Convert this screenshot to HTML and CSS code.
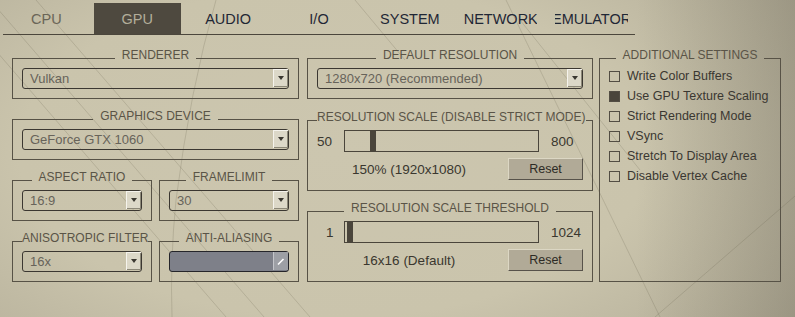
FILE: index.html
```html
<!DOCTYPE html>
<html lang="en">
<head>
    <meta charset="UTF-8">
    <title>GPU settings</title>
    <link rel="stylesheet" href="styles.css">
</head>
<body>
<svg class="backdrop" viewBox="0 0 795 317" width="795" height="317">
    <path d="M-48 0 L226 317 M-10 0 L264 317 M36 0 L310 317 M506 0 L660 317 M795 196 L655 317 M520 20 L640 170 M355 0 L405 60"/>
    <path d="M216 0 Q190 90 176 200 Q170 260 172 317"/>
</svg>

<div class="tabs">
    <div class="tab muted"><div class="tab-label">CPU</div></div>
    <div class="tab active"><div class="tab-label">GPU</div></div>
    <div class="tab"><div class="tab-label">AUDIO</div></div>
    <div class="tab"><div class="tab-label">I/O</div></div>
    <div class="tab"><div class="tab-label">SYSTEM</div></div>
    <div class="tab"><div class="tab-label">NETWORK</div></div>
    <div class="tab"><div class="tab-label">EMULATOR</div></div>
</div>

<div class="panes">
    <!-- left column: renderer / device / small combos -->
    <div class="col col-left">
        <fieldset class="group">
            <legend>RENDERER</legend>
            <div class="combo"><span class="combo-value">Vulkan</span><span class="arrow"><i></i></span></div>
        </fieldset>
        <fieldset class="group">
            <legend>GRAPHICS DEVICE</legend>
            <div class="combo"><span class="combo-value">GeForce GTX 1060</span><span class="arrow"><i></i></span></div>
        </fieldset>
        <div class="pair">
            <fieldset class="group half">
                <legend>ASPECT RATIO</legend>
                <div class="combo"><span class="combo-value">16:9</span><span class="arrow"><i></i></span></div>
            </fieldset>
            <fieldset class="group half">
                <legend>FRAMELIMIT</legend>
                <div class="combo"><span class="combo-value">30</span><span class="arrow"><i></i></span></div>
            </fieldset>
        </div>
        <div class="pair">
            <fieldset class="group half">
                <legend class="tight">ANISOTROPIC FILTER</legend>
                <div class="combo"><span class="combo-value">16x</span><span class="arrow"><i></i></span></div>
            </fieldset>
            <fieldset class="group half">
                <legend>ANTI-ALIASING</legend>
                <div class="combo disabled">
                    <span class="combo-value"></span>
                    <span class="arrow">
                        <svg width="9" height="9" viewBox="0 0 9 9"><path d="M2 7.5 L7.5 2" stroke="#fff" stroke-width="1.6"/></svg>
                    </span>
                </div>
            </fieldset>
        </div>
    </div>

    <!-- middle column: resolution -->
    <div class="col col-mid">
        <fieldset class="group">
            <legend>DEFAULT RESOLUTION</legend>
            <div class="combo"><span class="combo-value">1280x720 (Recommended)</span><span class="arrow"><i></i></span></div>
        </fieldset>
        <fieldset class="group scale-group">
            <legend class="tight">RESOLUTION SCALE (DISABLE STRICT MODE)</legend>
            <div class="slider-row">
                <span class="min">50</span>
                <div class="track"><div class="handle" style="left: 25px"></div></div>
                <span class="max">800</span>
            </div>
            <div class="value-row">
                <span class="value-label">150% (1920x1080)</span>
                <div class="reset">Reset</div>
            </div>
        </fieldset>
        <fieldset class="group">
            <legend>RESOLUTION SCALE THRESHOLD</legend>
            <div class="slider-row">
                <span class="min one">1</span>
                <div class="track"><div class="handle" style="left: 2px"></div></div>
                <span class="max">1024</span>
            </div>
            <div class="value-row">
                <span class="value-label">16x16 (Default)</span>
                <div class="reset">Reset</div>
            </div>
        </fieldset>
    </div>

    <!-- right column: checkboxes -->
    <fieldset class="group extra">
        <legend>ADDITIONAL SETTINGS</legend>
        <div class="checks">
            <div class="check"><span class="box"></span>Write Color Buffers</div>
            <div class="check"><span class="box on"></span>Use GPU Texture Scaling</div>
            <div class="check"><span class="box"></span>Strict Rendering Mode</div>
            <div class="check"><span class="box"></span>VSync</div>
            <div class="check"><span class="box"></span>Stretch To Display Area</div>
            <div class="check"><span class="box"></span>Disable Vertex Cache</div>
        </div>
    </fieldset>
</div>
</body>
</html>
```

FILE: styles.css
```css
body {
    margin: 0;
    width: 795px;
    height: 317px;
    overflow: hidden;
    position: relative;
    font-family: "Liberation Sans", Arial, sans-serif;
    background:
        linear-gradient(to right, rgba(0,0,0,0) 80%, rgba(70,66,55,0.22) 100%),
        radial-gradient(ellipse 72% 95% at 42% 48%, #ccc6af 0%, #cac4ac 55%, #b2ac97 100%);
}

/* faint decorative lines behind everything */
.backdrop {
    position: absolute;
    left: 0;
    top: 0;
    pointer-events: none;
}

.backdrop path {
    fill: none;
    stroke: rgba(95, 88, 70, 0.2);
    stroke-width: 1;
}

.tabs {
    position: relative;
    display: flex;
    gap: 4px;
    width: 632px;
    margin: 3px 0 0 3px;
    border-bottom: 1px solid #4b463c;
}

.tab {
    width: 87px;
    height: 31px;
    display: flex;
    justify-content: center;
    align-items: center;
    font-size: 14.5px;
    color: #1f2735;
}

.tab-label {
    width: 73px;
    display: flex;
    justify-content: center;
    overflow: hidden;
    white-space: nowrap;
}

.tab.muted {
    color: #6a6557;
}

.tab.active {
    background-color: #4e493f;
    color: #b3ae9a;
}

.panes {
    position: relative;
    display: flex;
    margin-top: 13px;
    padding-left: 12px;
}

.col {
    display: flex;
    flex-direction: column;
    gap: 10px;
}

.col-left {
    width: 287px;
    margin-right: 8px;
}

.col-mid {
    width: 286px;
    margin-right: 6px;
}

.col-mid > .group:first-child {
    margin-bottom: 1px;
}

.pair {
    display: flex;
    gap: 7px;
}

.group {
    margin: 0;
    padding: 0 9px 9px;
    border: 1px solid #575246;
    min-width: 0;
    box-sizing: border-box;
}

.group legend {
    margin: 0 auto;
    padding: 0 7px 6px;
    font-size: 12px;
    line-height: 14px;
    color: #5a5447;
    white-space: nowrap;
}

.group legend.tight {
    padding-left: 0;
    padding-right: 0;
}

.half {
    width: 140px;
}

.combo {
    height: 21px;
    box-sizing: border-box;
    border: 1px solid #3b3731;
    border-radius: 3px;
    display: flex;
    align-items: center;
    padding-left: 7px;
    font-size: 13px;
    color: #67635a;
}

.combo-value {
    flex: 1;
    white-space: nowrap;
}

.arrow {
    width: 15px;
    align-self: stretch;
    margin-bottom: 1px;
    display: flex;
    justify-content: center;
    align-items: center;
    background-color: #dcd8c8;
    box-shadow: inset 1px 1px 0 #f5f3ec, inset -1px -1px 0 #8c8878;
}

.arrow i {
    width: 0;
    height: 0;
    border-left: 3.5px solid transparent;
    border-right: 3.5px solid transparent;
    border-top: 4px solid #3a3730;
}

.combo.disabled {
    background-color: #7e8089;
    border-color: #25252a;
}

.combo.disabled .arrow {
    background-color: #9d9fa5;
    box-shadow: inset 1px 0 0 #c4c5ca;
}

.scale-group {
    padding-bottom: 10px;
}

.col-mid > .group:last-child {
    padding-bottom: 10px;
}

.slider-row {
    display: flex;
    align-items: center;
    height: 22px;
    font-size: 13.5px;
    color: #3a372f;
}

.min {
    width: 27px;
    box-sizing: border-box;
}

.min.one {
    padding-left: 9px;
}

.track {
    position: relative;
    width: 195px;
    height: 22px;
    box-sizing: border-box;
    border: 1px solid #4a453b;
}

.handle {
    position: absolute;
    top: 0;
    bottom: 0;
    width: 6px;
    background-color: #4a453b;
}

.max {
    margin-left: 12px;
}

.value-row {
    display: flex;
    align-items: center;
    gap: 7px;
    height: 22px;
    margin-top: 6px;
}

.value-label {
    flex: 1;
    text-align: center;
    font-size: 13.5px;
    color: #3a372f;
}

.reset {
    width: 75px;
    height: 22px;
    box-sizing: border-box;
    display: flex;
    justify-content: center;
    align-items: center;
    background-color: #b1aa97;
    border: 1px solid;
    border-color: #dcd7c4 #57524a #57524a #dcd7c4;
    font-size: 12.5px;
    color: #2d2a25;
}

.extra {
    width: 182px;
    height: 234px;
}

.checks {
    display: flex;
    flex-direction: column;
    margin-top: -2px;
}

.check {
    height: 20px;
    display: flex;
    align-items: center;
    gap: 7px;
    font-size: 12.5px;
    color: #3a3731;
    white-space: nowrap;
}

.box {
    width: 11px;
    height: 11px;
    box-sizing: border-box;
    border: 1px solid #524d43;
}

.box.on {
    background-color: #4a453b;
}
```
